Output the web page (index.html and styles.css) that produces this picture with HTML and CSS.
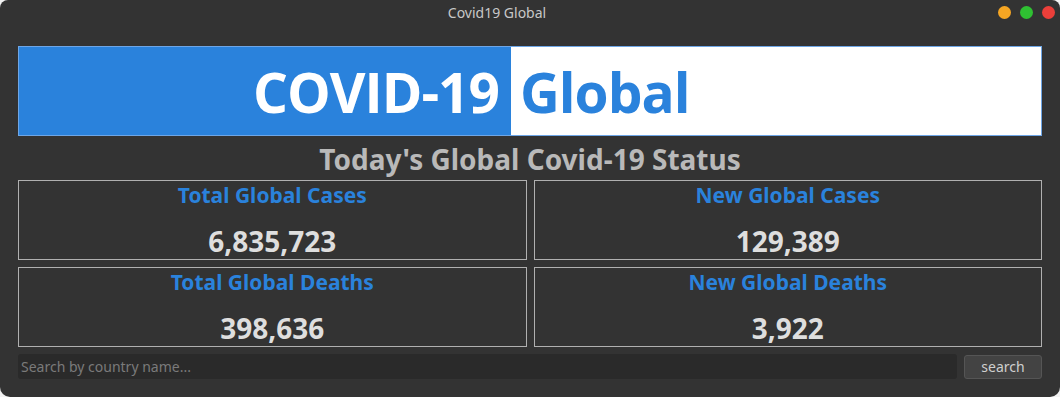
FILE: index.html
```html
<!DOCTYPE html>
<html lang="en">
<head>
    <meta charset="UTF-8">
    <title>Covid19 Global</title>
    <link rel="stylesheet" href="styles.css">
</head>
<body>
    <div class="window">
        <div class="titlebar">
            <span class="title">Covid19 Global</span>
            <div class="lights">
                <span class="light yellow"></span>
                <span class="light green"></span>
                <span class="light red"></span>
            </div>
        </div>

        <div class="content">
            <div class="banner">
                <div class="banner-left">COVID-19</div>
                <div class="banner-right">Global</div>
            </div>

            <h1 class="status-title">Today's Global Covid-19 Status</h1>

            <div class="cards">
                <div class="card">
                    <div class="card-label">Total Global Cases</div>
                    <div class="card-value">6,835,723</div>
                </div>
                <div class="card">
                    <div class="card-label">New Global Cases</div>
                    <div class="card-value">129,389</div>
                </div>
                <div class="card">
                    <div class="card-label">Total Global Deaths</div>
                    <div class="card-value">398,636</div>
                </div>
                <div class="card">
                    <div class="card-label">New Global Deaths</div>
                    <div class="card-value">3,922</div>
                </div>
            </div>

            <div class="search-row">
                <input type="text" class="search-input" placeholder="Search by country name...">
                <button class="search-button">search</button>
            </div>
        </div>
    </div>
</body>
</html>
```

FILE: styles.css
```css
html, body {
    margin: 0;
    padding: 0;
    background-color: #f2f2f2;
}

body {
    width: 1060px;
    height: 397px;
    font-family: "Noto Sans", "Open Sans", sans-serif;
}

.window {
    width: 1060px;
    height: 397px;
    background-color: #333333;
    border-radius: 8px 8px 10px 10px;
    overflow: hidden;
    box-sizing: border-box;
}

/* Barra de título */
.titlebar {
    height: 24px;
    display: flex;
    align-items: center;
    justify-content: center;
    padding-right: 66px;
    position: relative;
}

.title {
    color: #c8c8c8;
    font-size: 14px;
}

.lights {
    position: absolute;
    right: 5px;
    top: 6px;
    display: flex;
    gap: 9px;
}

.light {
    width: 13px;
    height: 13px;
    border-radius: 50%;
    display: block;
}

.yellow { background-color: #f6a623; }
.green  { background-color: #2fc032; }
.red    { background-color: #eb3f3a; }

.content {
    padding: 22px 18px 0 18px;
}

/* Banner */
.banner {
    display: flex;
    height: 90px;
    border: 1px solid #6ea6e6;
    box-sizing: border-box;
    font-family: "Open Sans", sans-serif;
    font-weight: 700;
    font-size: 55px;
}

.banner-left {
    width: 492px;
    background-color: #2a82dc;
    color: #ffffff;
    display: flex;
    align-items: center;
    justify-content: flex-end;
    padding-right: 12px;
    box-sizing: border-box;
    letter-spacing: -1px;
}

.banner-right {
    flex: 1;
    background-color: #ffffff;
    color: #2a82dc;
    display: flex;
    align-items: center;
    padding-left: 9px;
    letter-spacing: -1px;
}

.status-title {
    margin: 5px 0 3px 0;
    text-align: center;
    color: #b9b9b9;
    font-size: 28px;
    font-weight: 700;
    line-height: 36px;
}

/* Cartões */
.cards {
    display: grid;
    grid-template-columns: 1fr 1fr;
    column-gap: 7px;
    row-gap: 7px;
}

.card {
    height: 80px;
    border: 1px solid #b0b0b0;
    box-sizing: border-box;
    text-align: center;
}

.card-label {
    color: #2a82dc;
    font-size: 21px;
    font-weight: 700;
    line-height: 28px;
    margin-top: 0;
}

.card-value {
    color: #dedede;
    font-size: 28px;
    font-weight: 700;
    line-height: 36px;
    margin-top: 14px;
}

/* Pesquisa */
.search-row {
    display: flex;
    gap: 7px;
    margin-top: 7px;
}

.search-input {
    flex: 1;
    height: 25px;
    background-color: #2a2a2a;
    border: none;
    border-radius: 3px;
    padding: 0 3px;
    color: #cccccc;
    font-family: "Noto Sans", sans-serif;
    font-size: 14px;
    outline: none;
}

.search-input::placeholder {
    color: #7a7a7a;
}

.search-button {
    width: 78px;
    height: 24px;
    margin-top: 1px;
    background-color: #434343;
    border: 1px solid #555555;
    border-radius: 3px;
    color: #cfcfcf;
    font-family: "Noto Sans", sans-serif;
    font-size: 14px;
    line-height: 20px;
    padding: 0;
}
```
